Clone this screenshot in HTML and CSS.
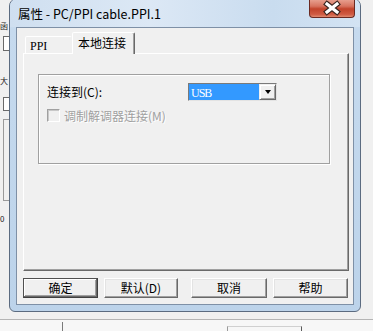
FILE: index.html
```html
<!DOCTYPE html>
<html lang="zh">
<head>
<meta charset="utf-8">
<title>属性 - PC/PPI cable.PPI.1</title>
<link rel="stylesheet" href="styles.css">
</head>
<body>
<div class="screen">
  <div class="main">
    <div class="leftbg">
      <span class="lchar lc1">函</span>
      <span class="lbox lb1"></span>
      <span class="lchar lc2">大</span>
      <span class="lbox lb2"></span>
      <span class="lbox lb3"></span>
      <span class="lchar lc3">0</span>
    </div>
    <div class="window">
      <div class="titlebar">
        <span class="title">属性 - PC/PPI cable.PPI.1</span>
        <div class="close">
          <svg width="46" height="19" viewBox="0 0 46 19">
            <path d="M18 5 L28 13 M28 5 L18 13" stroke="#3a2520" stroke-width="5.5" stroke-linecap="square" fill="none"/>
            <path d="M18 5 L28 13 M28 5 L18 13" stroke="#ffffff" stroke-width="3.2" stroke-linecap="square" fill="none"/>
          </svg>
        </div>
      </div>
      <div class="frame">
        <div class="client">
          <div class="tabs">
            <div class="tab tab-ppi"><span class="latin">PPI</span></div>
            <div class="tab tab-active">本地连接</div>
          </div>
          <div class="panel">
            <div class="group">
              <div class="row1">
                <span class="label">连接到(C):</span>
                <div class="combo">
                  <div class="combo-value"><span class="latin usb">USB</span></div>
                  <div class="combo-btn"><span class="arrow"></span></div>
                </div>
              </div>
              <div class="row2">
                <span class="checkbox"></span>
                <span class="disabled">调制解调器连接(M)</span>
              </div>
            </div>
          </div>
          <div class="buttons">
            <div class="btn btn-ok">确定</div>
            <div class="btn btn-def">默认(D)</div>
            <div class="btn btn-cancel">取消</div>
            <div class="btn btn-help">帮助</div>
          </div>
        </div>
      </div>
    </div>
    <div class="rightbg"></div>
  </div>
  <div class="bottombg">
    <div class="bline"></div>
    <div class="brow">
      <div class="bcell c1"></div>
      <div class="bcell c2"></div>
      <div class="bcell c3"></div>
    </div>
  </div>
</div>
</body>
</html>
```

FILE: styles.css
```css
html, body {
  margin: 0;
  padding: 0;
}
body {
  width: 373px;
  height: 331px;
  overflow: hidden;
  background: #f0f0f0;
  font-family: "Noto Sans CJK SC", "Noto Sans", sans-serif;
  font-size: 12px;
  color: #000;
}
.screen {
  display: flex;
  flex-direction: column;
  width: 373px;
  height: 331px;
}
.main {
  display: flex;
  height: 312px;
}
.leftbg {
  width: 9px;
  display: flex;
  flex-direction: column;
  overflow: hidden;
  background: #f0f0f0;
}
.lchar {
  display: block;
  height: 12px;
  line-height: 12px;
  font-size: 8px;
  margin-left: 0;
  color: #222;
}
.lc1 { margin-top: 20px; }
.lc2 { margin-top: 24px; }
.lc3 { margin-top: 12px; }
.lbox {
  display: block;
  margin-left: 3px;
  border: 1px solid #6a6a6a;
  border-right: none;
  background: #fff;
}
.lb1 { height: 13px; margin-top: 4px; }
.lb2 { height: 12px; margin-top: 10px; }
.lb3 { height: 80px; margin-top: 8px; border-color: #9a9a9a; background: #f0f0f0; }

.window {
  width: 352px;
  height: 314px;
  margin-top: -2px;
  box-sizing: border-box;
  border: 1px solid #5b6b80;
  border-radius: 8px 8px 6px 6px;
  background: linear-gradient(180deg, #d7e5f3 0%, #c6daee 10%, #bcd3ea 100%);
  display: flex;
  flex-direction: column;
  overflow: hidden;
}
.titlebar {
  height: 28px;
  display: flex;
  align-items: flex-start;
  background: linear-gradient(90deg, #cfdff0 0%, #dce8f5 40%, #c9dcef 75%, #d3e3f3 100%);
}
.title {
  margin-left: 8px;
  padding-top: 7px;
  font-size: 12.5px;
  line-height: 16px;
  color: #000;
  white-space: nowrap;
}
.close {
  margin-left: auto;
  margin-right: 5px;
  width: 46px;
  height: 19px;
  box-sizing: border-box;
  border: 1px solid #6b2a22;
  border-top: none;
  border-radius: 0 0 4px 4px;
  background: linear-gradient(180deg, #e9a595 0%, #d7735f 40%, #c2432b 55%, #cf5a42 85%, #e08a70 100%);
  overflow: hidden;
}
.close svg {
  display: block;
  margin-left: -1px;
}
.frame {
  flex: 1;
  padding: 0 6px 6px;
  display: flex;
}
.client {
  flex: 1;
  box-sizing: border-box;
  border: 1px solid #7e90a6;
  background: #f0f0f0;
  padding: 4px 4px 6px 6px;
  display: flex;
  flex-direction: column;
}
.tabs {
  height: 21px;
  display: flex;
  align-items: flex-end;
  padding-left: 2px;
}
.tab {
  box-sizing: border-box;
  border: 1px solid;
  border-bottom: none;
  border-color: #ffffff #696969 transparent #ffffff;
  border-radius: 2px 2px 0 0;
  box-shadow: inset -1px 0 0 #a0a0a0;
  background: #f0f0f0;
  white-space: nowrap;
}
.tab-ppi {
  width: 47px;
  height: 17px;
  padding-left: 4px;
  line-height: 15px;
  border-right-color: transparent;
  box-shadow: none;
}
.tab-active {
  position: relative;
  z-index: 1;
  width: 63px;
  height: 22px;
  margin-bottom: -1px;
  padding-left: 5px;
  padding-top: 2px;
  line-height: 16px;
  font-size: 12px;
}
.latin {
  font-family: "Liberation Serif", "DejaVu Serif", serif;
  font-size: 12px;
}
.panel {
  height: 218px;
  box-sizing: border-box;
  border: 1px solid;
  border-color: #ffffff #696969 #696969 #ffffff;
  box-shadow: inset -1px -1px 0 #a0a0a0;
  padding: 20px 0 0 14px;
}
.group {
  width: 292px;
  height: 90px;
  box-sizing: border-box;
  border: 1px solid #a0a0a0;
  box-shadow: inset 1px 1px 0 #ffffff, 1px 1px 0 #ffffff;
  padding: 8px 0 0 8px;
}
.row1 {
  display: flex;
  align-items: center;
  height: 18px;
}
.label {
  width: 141px;
  line-height: 16px;
  white-space: nowrap;
}
.combo {
  width: 89px;
  height: 18px;
  box-sizing: border-box;
  border: 1px solid;
  border-color: #7a7a7a #e3e3e3 #e3e3e3 #7a7a7a;
  display: flex;
  background: #fff;
}
.combo-value {
  width: 70px;
  height: 16px;
  background: #3399ff;
  color: #fff;
  padding-left: 2px;
  box-sizing: border-box;
  line-height: 16px;
}
.usb {
  letter-spacing: -1px;
}
.combo-btn {
  width: 17px;
  height: 16px;
  box-sizing: border-box;
  border: 1px solid;
  border-color: #f0f0f0 #696969 #696969 #f0f0f0;
  box-shadow: inset 1px 1px 0 #fff, inset -1px -1px 0 #a0a0a0;
  background: #f0f0f0;
  display: flex;
  align-items: center;
  justify-content: center;
}
.arrow {
  width: 0;
  height: 0;
  border-left: 3.5px solid transparent;
  border-right: 3.5px solid transparent;
  border-top: 4px solid #000;
}
.row2 {
  display: flex;
  align-items: center;
  margin-top: 7px;
  height: 15px;
}
.checkbox {
  width: 13px;
  height: 13px;
  box-sizing: border-box;
  border: 1px solid;
  border-color: #a0a0a0 #ffffff #ffffff #a0a0a0;
  box-shadow: inset 1px 1px 0 #c8c8c8;
  background: #f0f0f0;
}
.disabled {
  margin-left: 4px;
  color: #a0a0a0;
  text-shadow: 1px 1px 0 #ffffff;
  line-height: 15px;
  white-space: nowrap;
}
.buttons {
  display: flex;
  margin-top: 7px;
  height: 20px;
}
.btn {
  width: 75px;
  height: 20px;
  box-sizing: border-box;
  border: 1px solid;
  border-color: #ffffff #696969 #696969 #ffffff;
  box-shadow: inset -1px -1px 0 #a0a0a0, inset 1px 1px 0 #e3e3e3;
  background: #f0f0f0;
  text-align: center;
  line-height: 18px;
  white-space: nowrap;
}
.btn-ok {
  border-color: #505050 #404040 #404040 #505050;
  box-shadow: inset -1px -1px 0 #696969, inset 1px 1px 0 #ffffff, inset -2px -2px 0 #a0a0a0;
}
.btn-def { margin-left: 6px; width: 74px; }
.btn-cancel { margin-left: 13px; width: 76px; }
.btn-help { margin-left: 6px; }
.rightbg {
  flex: 1;
  background: #f0f0f0;
}
.bottombg {
  height: 19px;
  display: flex;
  flex-direction: column;
}
.bline {
  margin-top: 7px;
  height: 1px;
  background: #b4b4b4;
}
.brow {
  flex: 1;
  display: flex;
  background: #f7f7f7;
}
.bcell {
  box-sizing: border-box;
}
.c1 {
  width: 63px;
  border-right: 1px solid #7a7a7a;
  margin-top: 2px;
}
.c2 {
  width: 164px;
}
.c3 {
  width: 75px;
  margin-top: 6px;
  border-left: 1px solid #9a9a9a;
  border-right: 1px solid #5a5a5a;
  border-top: 1px solid #d0d0d0;
}
```
